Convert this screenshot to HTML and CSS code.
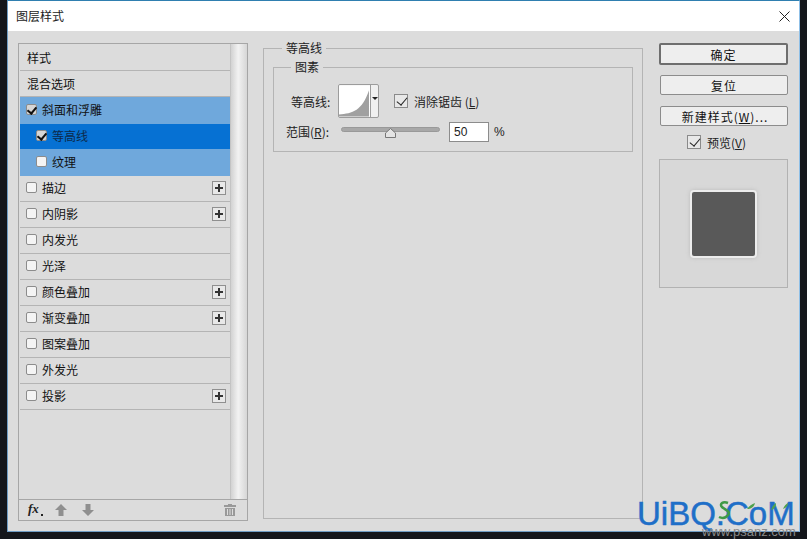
FILE: index.html
```html
<!DOCTYPE html>
<html>
<head>
  <meta charset="UTF-8">
  <title>图层样式</title>
  <link rel="stylesheet" href="styles.css">
</head>
<body>
  <div class="window">
    <div class="titlebar">
      <span class="title">图层样式</span>
      <svg class="close" width="11" height="11" viewBox="0 0 11 11"><path d="M.5.5l10 10M10.500.5l-10 10" stroke="#222" fill="none"/></svg>
    </div>

    <div class="content">
      <!-- effect list -->
      <div class="sidebar">
        <div class="sidebar-main">
          <div class="effects">
            <div class="row row-tall">样式</div>
            <div class="row row-tall">混合选项</div>
            <div class="row row-open"><span class="check on"></span>斜面和浮雕</div>
            <div class="row row-active row-sub"><span class="check on"></span>等高线</div>
            <div class="row row-open row-sub"><span class="check"></span>纹理</div>
            <div class="row"><span class="check"></span>描边<span class="plus"></span></div>
            <div class="row"><span class="check"></span>内阴影<span class="plus"></span></div>
            <div class="row"><span class="check"></span>内发光</div>
            <div class="row"><span class="check"></span>光泽</div>
            <div class="row"><span class="check"></span>颜色叠加<span class="plus"></span></div>
            <div class="row"><span class="check"></span>渐变叠加<span class="plus"></span></div>
            <div class="row"><span class="check"></span>图案叠加</div>
            <div class="row"><span class="check"></span>外发光</div>
            <div class="row"><span class="check"></span>投影<span class="plus"></span></div>
          </div>
          <div class="scrollbar"></div>
        </div>
        <div class="toolbar">
          <span class="fx">fx</span><span class="fx-arrow"></span>
          <svg class="tool" width="12" height="12" viewBox="0 0 12 12"><path d="M6 0l6 6H8.500v6h-5V6H0z" fill="#8f8f8f"/></svg>
          <svg class="tool" width="12" height="12" viewBox="0 0 12 12"><path d="M6 12l6-6H8.500V0h-5v6H0z" fill="#8f8f8f"/></svg>
          <svg class="trash" width="12" height="12" viewBox="0 0 12 12"><path d="M4 0h4v1h4v2H0V1h4zM1 4h10v8H1z" fill="#999"/><path d="M3.500 5v6M6 5v6M8.500 5v6" stroke="#ddd"/></svg>
        </div>
      </div>

      <!-- contour options -->
      <fieldset class="group outer">
        <legend>等高线</legend>
        <fieldset class="group inner">
          <legend>图素</legend>
          <div class="form-line">
            <span class="form-label contour-label">等高线:</span>
            <div class="contour">
              <svg width="32" height="32" viewBox="0 0 32 32"><rect width="32" height="32" fill="#fff"/><path d="M0 32V30C14 29 24 26 31 5V32z" fill="#a0a0a0"/></svg>
              <span class="contour-drop"></span>
            </div>
            <label class="check-label"><span class="check-big"></span>消除锯齿 (<u>L</u>)</label>
          </div>
          <div class="form-line range-line">
            <span class="form-label">范围(<u>R</u>):</span>
            <div class="slider">
              <svg class="thumb" width="11" height="10" viewBox="0 0 11 10"><path d="M.5 9.500V5L5.500.5l5 4.500v4.500z" fill="#e4e4e4" stroke="#777"/></svg>
            </div>
            <span class="num">50</span>
            <span class="pct">%</span>
          </div>
        </fieldset>
      </fieldset>

      <!-- buttons and preview -->
      <div class="actions">
        <button class="btn btn-default">确定</button>
        <button class="btn">复位</button>
        <button class="btn btn-new">新建样式(<u>W</u>)...</button>
        <label class="preview-check"><span class="check-big"></span>预览(<u>V</u>)</label>
        <div class="preview"><div class="swatch"></div></div>
      </div>
    </div>
  </div>

  <div class="mark">
    <span class="mark-text">UiBQ.CoM</span>
    <svg class="mark-leaves" width="90" height="26" viewBox="0 0 90 26">
      <path d="M13 3c-5-2-9 1-6 4s9 4 6 8-7 3-9 2" fill="none" stroke="#3f9a46" stroke-width="2.500"/>
      <path d="M32 9c2-3 5-5 8-6-1 4-4 6-8 6zM56 10c1-3 3-6 5-7 0 4-2 6-5 7zM68 9c1-3 3-5 5-6 0 3-2 5-5 6z" fill="#4fa24d"/>
    </svg>
    <span class="mark-sub">www.psanz.com</span>
  </div>
</body>
</html>
```

FILE: styles.css
```css
* {
  box-sizing: border-box;
}

html, body {
  margin: 0;
  height: 100%;
}

body {
  background: #14161b;
  padding: 0 7px 7px;
  overflow: hidden;
  font-family: "Noto Sans CJK SC", "Liberation Sans", sans-serif;
  font-size: 12px;
  color: #1a1a1a;
}

.window {
  width: 793px;
  height: 532px;
  border-top: 1px solid #2f7fb0;
  border-right: 1px solid #8fc0e8;
  border-bottom: 1px solid #6f9cc4;
  border-left: 1px solid #6f9cc4;
  background: #dcdcdc;
  display: flex;
  flex-direction: column;
}

.titlebar {
  height: 30px;
  flex: none;
  background: #fff;
  display: flex;
  align-items: center;
  justify-content: space-between;
  padding: 0 9px 0 8px;
}

.title {
  color: #222;
  margin-top: -2px;
}

.content {
  flex: 1;
  display: flex;
  padding: 12px 10px 11px 10px;
}

/* left list */
.sidebar {
  width: 230px;
  height: 478px;
  border: 1px solid #a6a6a6;
  display: flex;
  flex-direction: column;
  flex: none;
}

.sidebar-main {
  flex: 1;
  display: flex;
  min-height: 0;
  padding-left: 1px;
}

.effects {
  width: 211px;
  padding-top: 1px;
  border-right: 1px solid #c4c4c4;
}

.scrollbar {
  flex: 1;
  background: linear-gradient(to right, #d2d2d2, #f2f2f2 45%, #d6d6d6);
}

.row {
  height: 26px;
  border-bottom: 1px solid #b4b4b4;
  display: flex;
  align-items: center;
  padding: 0 4px 2px 6px;
  white-space: nowrap;
  color: #111;
}

.row-tall {
  padding: 0 4px 0 7px;
}

.row-open {
  height: 27px;
  background: #6fa8dc;
  border-bottom: none;
}

.row-active {
  height: 25px;
  background: #0671d3;
  border-bottom: none;
  color: #0d2a4a;
}

.row-sub {
  padding-left: 16px;
}

.check {
  width: 11px;
  height: 11px;
  flex: none;
  margin-right: 5px;
  border: 1px solid #8c8c8c;
  border-radius: 2px;
  background: #f4f4f4;
  position: relative;
}

.check.on {
  background: #d6d6d6;
}

.check.on::after {
  content: "";
  position: absolute;
  left: 2px;
  top: 0;
  width: 4px;
  height: 7px;
  border: solid #111;
  border-width: 0 2px 2px 0;
  transform: rotate(40deg);
}

.plus {
  width: 14px;
  height: 14px;
  margin-left: auto;
  border: 1px solid #8f8f8f;
  background:
    linear-gradient(#333, #333) center / 8px 2px no-repeat,
    linear-gradient(#333, #333) center / 2px 8px no-repeat,
    #e8e8e8;
}

.toolbar {
  height: 21px;
  flex: none;
  border-top: 1px solid #a6a6a6;
  display: flex;
  align-items: center;
  padding: 0 11px 1px 9px;
}

.fx {
  font-family: "Liberation Serif", serif;
  font-style: italic;
  font-weight: bold;
  font-size: 13px;
  line-height: 14px;
  margin-top: -2px;
  color: #222;
}

.fx-arrow {
  width: 2px;
  height: 2px;
  background: #222;
  margin: 10px 12px 0 2px;
}

.tool {
  margin-right: 15px;
}

.trash {
  margin-left: auto;
}

/* middle group boxes */
.group {
  margin: 0;
  border: 1px solid #b4b4b4;
  min-width: 0;
}

.group legend {
  padding: 0 4px;
  font-size: 12px;
  line-height: 14px;
  color: #222;
}

.outer {
  width: 380px;
  height: 478px;
  margin: -2px 0 0 15px;
  padding: 5px 9px 0;
  flex: none;
}

.outer > legend {
  margin-left: 9px;
}

.inner {
  height: 92px;
  padding: 10px 0 0 12px;
}

.inner > legend {
  margin-left: 5px;
}

.form-line {
  display: flex;
  align-items: center;
  height: 34px;
  color: #222;
}

.form-label {
  width: 52px;
  flex: none;
  white-space: nowrap;
}

.contour-label {
  padding-left: 5px;
}

.contour {
  width: 41px;
  height: 34px;
  border: 1px solid #9c9c9c;
  border-radius: 2px;
  display: flex;
  background: #f0f0f0;
  flex: none;
  overflow: hidden;
}

.contour svg {
  display: block;
  flex: none;
  border-right: 1px solid #9c9c9c;
}

.contour-drop {
  width: 0;
  height: 0;
  margin: 12px 0 0 1px;
  border: 3px solid transparent;
  border-top: 3px solid #222;
}

.check-label {
  display: flex;
  align-items: center;
  margin-left: 15px;
  white-space: nowrap;
}

.check-big {
  width: 14px;
  height: 14px;
  flex: none;
  margin-right: 6px;
  border: 1px solid #8a8a8a;
  background: #e8e8e8;
  position: relative;
}

.check-big::after {
  content: "";
  position: absolute;
  left: 4px;
  top: 0;
  width: 5px;
  height: 9px;
  border: solid #222;
  border-width: 0 1.500px 1.500px 0;
  transform: rotate(40deg);
}

.range-line {
  height: 20px;
  margin-top: 4px;
}

.range-line .form-label {
  width: 55px;
  margin-top: -2px;
}

.slider {
  width: 99px;
  height: 5px;
  border-radius: 3px;
  background: #a8a8a8;
  border: 1px solid #999;
  position: relative;
  flex: none;
  margin-top: -5px;
}

.thumb {
  position: absolute;
  left: 43px;
  top: 0;
  display: block;
}

.num {
  width: 40px;
  height: 20px;
  margin-left: 9px;
  border: 1px solid #8c8c8c;
  background: #fff;
  padding-left: 4px;
  line-height: 18px;
  flex: none;
  font-family: "Liberation Sans", sans-serif;
}

.pct {
  margin-left: 5px;
  font-family: "Liberation Sans", sans-serif;
}

/* right column */
.actions {
  width: 130px;
  margin-left: 16px;
  flex: none;
  display: flex;
  flex-direction: column;
  align-items: flex-start;
}

.btn {
  width: 128px;
  height: 20px;
  margin: 1px 0 10px 1px;
  padding: 0;
  border: 1px solid #8c8c8c;
  border-radius: 2px;
  background: #eeeeee;
  font: inherit;
  letter-spacing: 1px;
  color: #111;
}

.btn-new {
  padding-left: 2px;
}

.btn-default {
  height: 22px;
  margin: 0 0 9px;
  width: 129px;
  border: 2px solid #6e6e6e;
}

.preview-check {
  display: flex;
  align-items: center;
  height: 16px;
  margin: -2px 0 9px 28px;
  color: #222;
}

.preview {
  width: 129px;
  height: 129px;
  border: 1px solid #b2b2b2;
  background: #d8d8d8;
  display: flex;
  align-items: center;
  justify-content: center;
}

.swatch {
  width: 67px;
  height: 68px;
  background: #595959;
  border: 2px solid #ececec;
  border-radius: 4px;
  box-shadow: 0 0 4px #bcbcbc;
}

/* watermark over the corner */
.mark {
  position: absolute;
  left: 637px;
  top: 500px;
  width: 165px;
}

.mark-leaves {
  position: absolute;
  left: 78px;
  top: 0;
}

.mark-text {
  display: block;
  font-family: "Liberation Sans", sans-serif;
  font-size: 33px;
  line-height: 27px;
  color: #1f6fc8;
  white-space: nowrap;
  -webkit-text-stroke: 0.5px #1f6fc8;
}

.mark-sub {
  display: block;
  margin: 0 0 0 65px;
  font-family: "Liberation Sans", sans-serif;
  font-size: 13px;
  line-height: 10px;
  color: #8a8a8a;
}
```
